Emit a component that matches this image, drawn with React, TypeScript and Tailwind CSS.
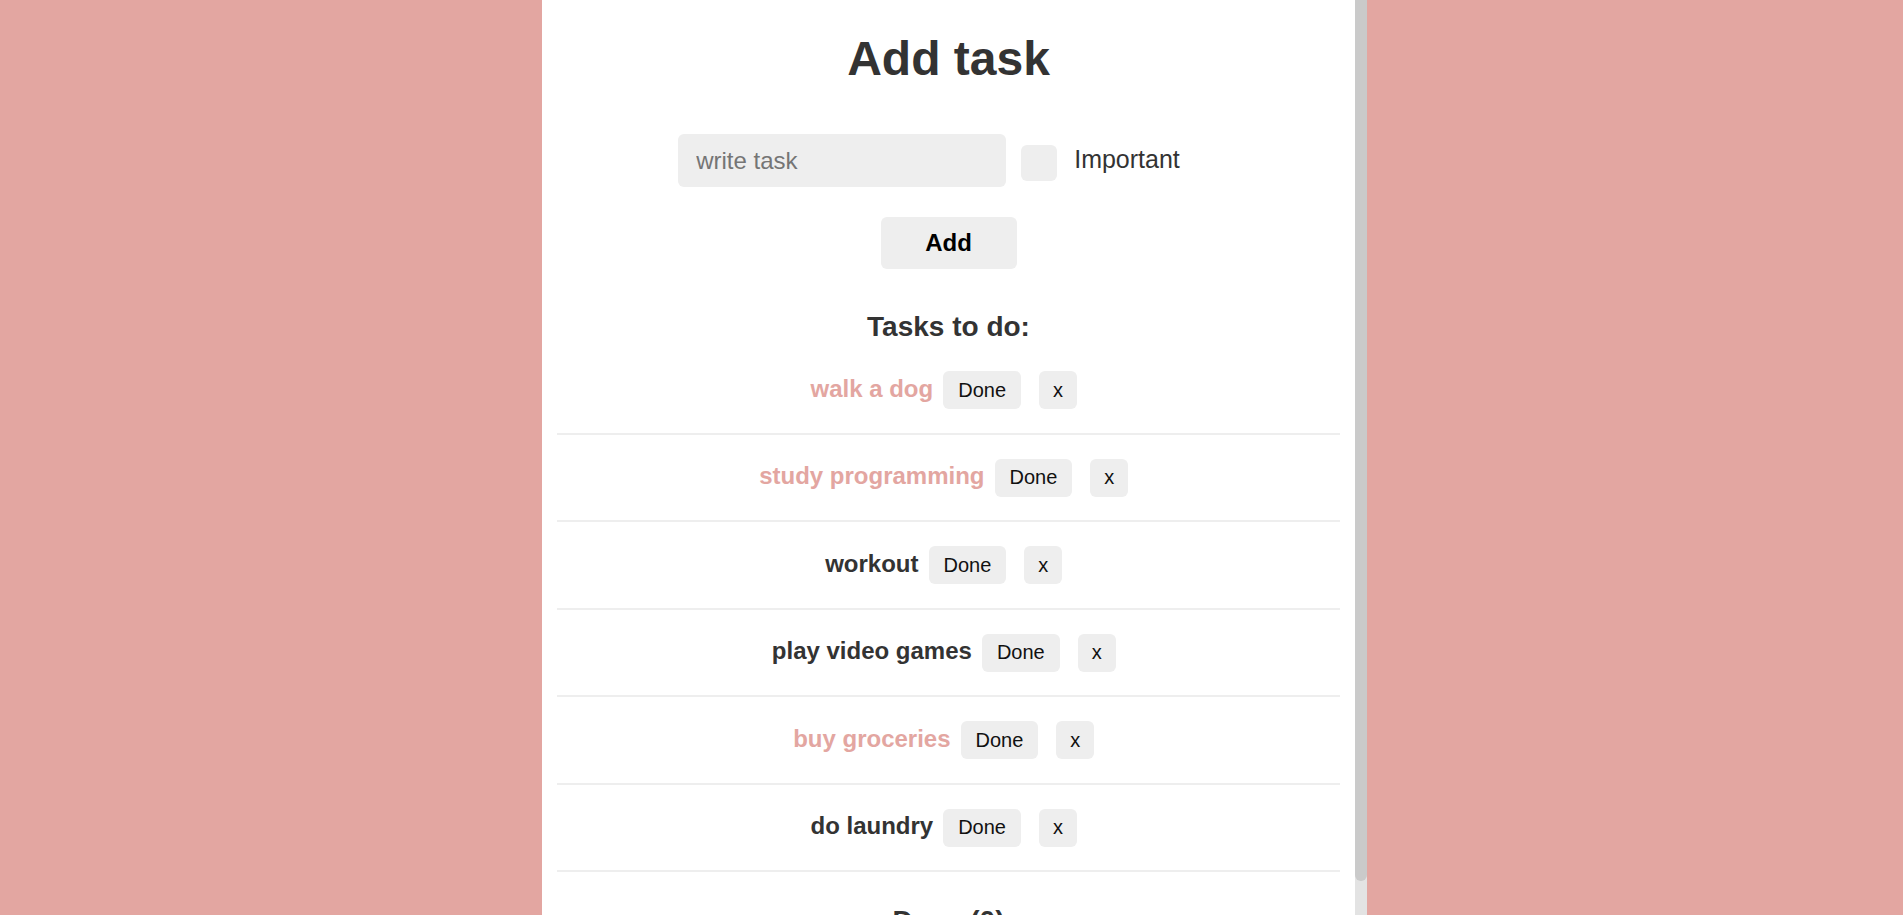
import React, { useState } from "react";

type Task = { id: number; text: string; important: boolean };

const initialTasks: Task[] = [
  { id: 1, text: "walk a dog", important: true },
  { id: 2, text: "study programming", important: true },
  { id: 3, text: "workout", important: false },
  { id: 4, text: "play video games", important: false },
  { id: 5, text: "buy groceries", important: true },
  { id: 6, text: "do laundry", important: false },
];

const TaskRow = ({ task, onDone, onDelete }: { task: Task; onDone: () => void; onDelete: () => void }) => (
  <li className="flex h-[87.5px] items-baseline justify-center border-b-2 border-[#eeeeee] pt-[24px]">
    <span className={`text-[24px] font-bold leading-[28px] ${task.important ? "text-[#e3a6a1]" : "text-[#333333]"}`}>
      {task.text}
    </span>
    <button
      onClick={onDone}
      className="ml-[10px] rounded-md bg-[#eeeeee] px-[15px] py-[7.5px] text-[20px] leading-[23px] text-[#111111]"
    >
      Done
    </button>
    <button
      onClick={onDelete}
      className="ml-[18px] mr-[9.5px] rounded-md bg-[#eeeeee] px-[14px] py-[7.5px] text-[20px] leading-[23px] text-[#111111]"
    >
      x
    </button>
  </li>
);

export default function App() {
  const [tasks, setTasks] = useState<Task[]>(initialTasks);
  const [done, setDone] = useState<Task[]>([]);
  const [text, setText] = useState("");
  const [important, setImportant] = useState(false);

  const addTask = () => {
    if (!text.trim()) return;
    setTasks([...tasks, { id: Date.now(), text: text.trim(), important }]);
    setText("");
    setImportant(false);
  };

  return (
    <div className="flex h-screen justify-center bg-[#e3a6a1] pl-[6px] font-['Liberation_Sans',Arial,sans-serif]">
      <div className="flex h-screen w-[825px] bg-white">
        <div className="h-screen w-[813px] overflow-y-auto px-[15px] pb-[13px] pt-[31px] [scrollbar-width:none]">
          <h1 className="text-center text-[48px] font-bold leading-[56px] text-[#333333]">Add task</h1>

          <div className="mt-[47px] flex items-center justify-center">
            <input
              value={text}
              onChange={(e) => setText(e.target.value)}
              placeholder="write task"
              className="h-[53px] w-[328px] rounded-md bg-[#eeeeee] pl-[18px] text-[24px] text-[#333333] outline-none placeholder:text-[#757575]"
            />
            <input
              type="checkbox"
              checked={important}
              onChange={(e) => setImportant(e.target.checked)}
              className="ml-[15px] mt-[4px] h-[36px] w-[36px] appearance-none rounded-md bg-[#eeeeee] checked:bg-[#e3a6a1]"
            />
            <label className="mb-[4px] ml-[17px] mr-[39px] text-[25px] leading-[28px] text-[#333333]">Important</label>
          </div>

          <button
            onClick={addTask}
            className="mx-auto mt-[30px] block h-[52px] w-[136px] rounded-md bg-[#eeeeee] text-[24px] font-bold text-black"
          >
            Add
          </button>

          <h2 className="mt-[42px] text-center text-[28px] font-bold leading-[32px] text-[#333333]">Tasks to do:</h2>
          <ul className="mt-[4px]">
            {tasks.map((t) => (
              <TaskRow
                key={t.id}
                task={t}
                onDone={() => {
                  setTasks(tasks.filter((x) => x.id !== t.id));
                  setDone([...done, t]);
                }}
                onDelete={() => setTasks(tasks.filter((x) => x.id !== t.id))}
              />
            ))}
          </ul>

          <h2 className="mt-[33px] text-center text-[28px] font-bold leading-[32px] text-[#333333]">Done ({done.length})</h2>
          <ul>
            {done.map((t) => (
              <li key={t.id} className="py-[12px] text-center text-[24px] text-[#999999] line-through">
                {t.text}
              </li>
            ))}
          </ul>
        </div>

        {/* scrollbar */}
        <div className="flex h-screen w-[12px] flex-col bg-[#e3e3e3]">
          <div className="h-[881px] w-[12px] rounded-b-[6px] bg-[#cacaca]" />
        </div>
      </div>
    </div>
  );
}
